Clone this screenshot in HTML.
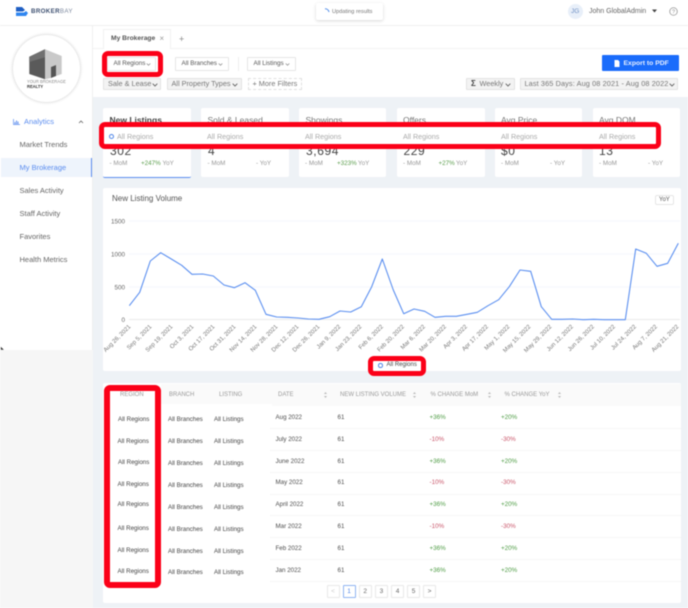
<!DOCTYPE html>
<html>
<head>
<meta charset="utf-8">
<title>Broker Bay</title>
<style>
html,body{margin:0;padding:0;background:#fff}
#p{position:relative;width:688px;height:608px;overflow:hidden;background:#fff;font-family:"Liberation Sans",sans-serif;color:#555;filter:blur(.45px)}
#p div,#p span,#p svg{position:absolute}
#p svg svg{position:static}
.t{white-space:nowrap;line-height:0;font-size:7px;color:#555;margin-top:.6px}
.c{background:#fff;border-radius:2px}
.b{box-sizing:border-box;border:1px solid #e6e6e6;background:#fff;border-radius:1px}
.g{box-sizing:border-box;border:1px solid #e2e2e2;background:#f3f3f3;border-radius:1px}
.n{font-size:7.5px;color:#666}
.ti{font-size:8.5px;color:#777}
.ar{font-size:7.2px;color:#aaa}
.v{font-size:12px;color:#444;letter-spacing:.6px}
.m{font-size:6.3px;color:#999}
.u{font-size:6.3px;color:#5c9e4e}
.h{font-size:6px;color:#999}
.r{font-size:6.2px;color:#444}
.d{font-size:6.2px;color:#4e4e4e}
.up{font-size:6.3px;color:#4f9c45}
.dn{font-size:6.3px;color:#c9566a}
.l{height:1px;background:#f6f6f6}
.red{box-sizing:border-box;border:5.5px solid #fb0018;background:#fff;border-radius:6px}
.pg{box-sizing:border-box;width:13px;height:13px;border:1px solid #e8e8e8;background:#fff;font-size:6.5px;line-height:11px;text-align:center;color:#666;border-radius:1px}
.ch path{fill:none;stroke:#888;stroke-width:.7}
.ck path{fill:none;stroke:#555;stroke-width:.8}
.so path{fill:#bbb}
</style>
</head>
<body>
<div id="p">
  <!-- backgrounds -->
  <div style="left:93px;top:97px;width:595px;height:511px;background:#eef2f6"></div>
  <div style="left:0;top:350px;width:93px;height:258px;background:#f6f6f6"></div>
  <div style="left:0;top:25px;width:688px;height:1px;background:#efefef"></div>
  <div style="left:92px;top:26px;width:1px;height:324px;background:#efefef"></div>
  <div style="left:93px;top:48px;width:595px;height:1px;background:#f3f3f3"></div>

  <!-- top bar -->
  <svg style="left:15px;top:6px" width="14" height="11" viewBox="0 0 14 11"><path d="M1 1h6l3 3-2 1.500H1z" fill="#1f5fc4"/><path d="M1 6.500h8l2-1.500 2 2-2 3H1z" fill="#2f86f0"/></svg>
  <span class="t" style="left:31px;top:11px;font-size:6.2px;font-weight:bold;color:#3c4f70;letter-spacing:.35px">BROKER<span style="position:static;font-weight:normal;color:#7d8aa0">BAY</span></span>
  <div style="left:316px;top:3px;width:67px;height:17px;background:#fff;border-radius:2px;box-shadow:0 1px 3px rgba(0,0,0,.16)"></div>
  <svg style="left:324px;top:8px" width="6" height="6" viewBox="0 0 6 6"><path d="M1 .8A4 4 0 0 1 5 4" fill="none" stroke="#4f8ce8" stroke-width="1"/></svg>
  <span class="t" style="left:332px;top:11px;font-size:5.6px;color:#777">Updating results</span>
  <div style="left:568px;top:3.500px;width:15px;height:15px;border-radius:50%;background:#e8eff9"></div>
  <span class="t" style="left:571px;top:11px;font-size:6.500px;color:#6d8fc4">JG</span>
  <span class="t" style="left:589px;top:11px;font-size:7px;color:#666">John GlobalAdmin</span>
  <svg style="left:652px;top:9px" width="5" height="4" viewBox="0 0 5 4"><path d="M0 .5h5L2.500 3.500z" fill="#444"/></svg>
  <svg style="left:669px;top:7px" width="9" height="9" viewBox="0 0 9 9"><circle cx="4.500" cy="4.500" r="3.800" fill="none" stroke="#888" stroke-width=".7"/><text x="4.500" y="6.500" font-size="5.500" text-anchor="middle" fill="#888" font-family="Liberation Sans">?</text></svg>

  <!-- sidebar -->
  <div style="left:13px;top:35px;width:67px;height:67px;border-radius:50%;background:#fff;box-shadow:0 0 3px rgba(0,0,0,.22)"></div>
  <svg style="left:0;top:0" width="93" height="100" viewBox="0 0 93 100">
    <path d="M29.300 56.700 45 49.300v30L29.300 74z" fill="#5a5a5a"/>
    <path d="M29.300 56.700 45 49.300v8L29.300 62z" fill="#707070"/>
    <path d="M45 49.300 61.700 56v18L56 76V65l-5 2v11l-6 1.300z" fill="#c9c9c9"/>
    <path d="M51 67l5-2v11l-5 2z" fill="#555"/>
  </svg>
  <span class="t" style="left:27px;top:81.500px;font-size:4.100px;color:#888">YOUR BROKERAGE</span>
  <span class="t" style="left:27px;top:86.500px;font-size:4.100px;font-weight:bold;color:#333">REALTY</span>

  <svg style="left:13px;top:119px" width="7" height="6" viewBox="0 0 7 6"><path d="M.5 0v5.500H7" fill="none" stroke="#5b8def" stroke-width=".7"/><path d="M2 5V3M3.500 5V1.500M5 5V2.500" stroke="#5b8def" stroke-width=".9"/></svg>
  <span class="t" style="left:24px;top:121.500px;font-size:7.500px;color:#5b8def">Analytics</span>
  <svg style="left:78px;top:120px" width="6" height="4" viewBox="0 0 6 4"><path d="M1 3l2-2 2 2" fill="none" stroke="#666" stroke-width=".8"/></svg>
  <span class="t n" style="left:19.500px;top:144px">Market Trends</span>
  <div style="left:1px;top:158px;width:91px;height:19px;background:#eef4fc"></div>
  <div style="left:90.500px;top:158px;width:1.500px;height:19px;background:#5b8def"></div>
  <span class="t n" style="left:19.500px;top:167px;color:#5b8def">My Brokerage</span>
  <span class="t n" style="left:19.500px;top:190px">Sales Activity</span>
  <span class="t n" style="left:19.500px;top:213px">Staff Activity</span>
  <span class="t n" style="left:19.500px;top:236px">Favorites</span>
  <span class="t n" style="left:19.500px;top:259px">Health Metrics</span>
  <svg style="left:0;top:346px" width="5" height="5" viewBox="0 0 5 5"><path d="M.8.8v3h3z" fill="#333"/></svg>

  <!-- tabs -->
  <div style="left:103px;top:29px;width:68px;height:20px;background:#fff;border:1px solid #f1f1f1;border-bottom:0;box-sizing:border-box"></div>
  <span class="t" style="left:111px;top:38.500px;font-size:6.700px;font-weight:bold;color:#555">My Brokerage</span>
  <span class="t" style="left:159.500px;top:38px;font-size:8px;color:#999">×</span>
  <span class="t" style="left:179px;top:38.500px;font-size:9px;color:#888">+</span>

  <!-- filters -->
  <div class="b" style="left:175px;top:57px;width:54px;height:14px"></div>
  <span class="t" style="left:181.500px;top:63.500px;font-size:6.300px">All Branches</span>
  <svg class="ch" style="left:217.500px;top:62.500px" width="5" height="3" viewBox="0 0 5 3"><path d="M.7.500 2.500 2.300 4.300.500"/></svg>
  <div style="left:238px;top:57px;width:1px;height:14px;background:#eee"></div>
  <div class="b" style="left:247px;top:57px;width:49px;height:14px"></div>
  <span class="t" style="left:253.500px;top:63.500px;font-size:6.300px">All Listings</span>
  <svg class="ch" style="left:285px;top:62.500px" width="5" height="3" viewBox="0 0 5 3"><path d="M.7.500 2.500 2.300 4.300.500"/></svg>
  <div class="g" style="left:103px;top:78px;width:58px;height:12px"></div>
  <span class="t" style="left:108px;top:83.500px;font-size:7.300px;color:#777">Sale &amp; Lease</span>
  <svg class="ck" style="left:151.500px;top:82.500px" width="6" height="4" viewBox="0 0 6 4"><path d="M.7.700 3 3 5.300.700"/></svg>
  <div class="g" style="left:167px;top:78px;width:75px;height:12px"></div>
  <span class="t" style="left:171.500px;top:83.500px;font-size:7.300px;color:#777">All Property Types</span>
  <svg class="ck" style="left:232.300px;top:82.500px" width="6" height="4" viewBox="0 0 6 4"><path d="M.7.700 3 3 5.300.700"/></svg>
  <div style="left:248px;top:78px;width:54px;height:12px;border:1px dashed #e0e0e0;box-sizing:border-box"></div>
  <span class="t" style="left:252.500px;top:83.500px;font-size:7.300px;color:#777">+ More Filters</span>

  <div style="left:602px;top:55px;width:77px;height:16px;background:#1a6cfb;border-radius:1px"></div>
  <svg style="left:614px;top:60px" width="6" height="7" viewBox="0 0 6 7"><path d="M.5 0H4l1.500 1.500V7H.5z" fill="#fff"/></svg>
  <span class="t" style="left:623.500px;top:63px;font-size:6.800px;font-weight:bold;color:#e8f0ff">Export to PDF</span>

  <div class="g" style="left:466px;top:78px;width:49px;height:12px"></div>
  <span class="t" style="left:471px;top:83.500px;font-size:8px;font-weight:bold;color:#444">Σ</span>
  <span class="t" style="left:479.500px;top:83.500px;font-size:7.300px;color:#777">Weekly</span>
  <svg class="ck" style="left:505.300px;top:82.500px" width="6" height="4" viewBox="0 0 6 4"><path d="M.7.700 3 3 5.300.700"/></svg>
  <div class="g" style="left:520px;top:78px;width:158px;height:12px"></div>
  <span class="t" style="left:524.500px;top:83.500px;font-size:7.300px;color:#777;letter-spacing:.12px">Last 365 Days: Aug 08 2021 - Aug 08 2022</span>
  <svg class="ck" style="left:668.700px;top:82.500px" width="6" height="4" viewBox="0 0 6 4"><path d="M.7.700 3 3 5.300.700"/></svg>

  <!-- stat cards -->
  <div class="c" style="left:103px;top:108px;width:88px;height:69px;border-bottom:1px solid #5b8def"></div>
  <div class="c" style="left:201px;top:108px;width:88px;height:69px"></div>
  <div class="c" style="left:299px;top:108px;width:87px;height:69px"></div>
  <div class="c" style="left:397px;top:108px;width:88px;height:69px"></div>
  <div class="c" style="left:495px;top:108px;width:87px;height:69px"></div>
  <div class="c" style="left:593px;top:108px;width:87px;height:69px"></div>

  <span class="t ti" style="left:109.500px;top:119.500px;font-weight:bold;color:#444">New Listings</span>
  <span class="t ti" style="left:207.500px;top:119.500px">Sold &amp; Leased</span>
  <span class="t ti" style="left:305.500px;top:119.500px">Showings</span>
  <span class="t ti" style="left:403px;top:119.500px">Offers</span>
  <span class="t ti" style="left:501px;top:119.500px">Avg Price</span>
  <span class="t ti" style="left:599px;top:119.500px">Avg DOM</span>

  <span class="t v" style="left:110px;top:150px">302</span>
  <span class="t v" style="left:208px;top:150px">4</span>
  <span class="t v" style="left:306px;top:150px">3,694</span>
  <span class="t v" style="left:403.500px;top:150px">229</span>
  <span class="t v" style="left:501px;top:150px">$0</span>
  <span class="t v" style="left:599px;top:150px">13</span>

  <span class="t m" style="left:109.500px;top:163px">- MoM</span>
  <span class="t u" style="left:141px;top:163px">+247%</span>
  <span class="t m" style="left:162.500px;top:163px">YoY</span>
  <span class="t m" style="left:207.500px;top:163px">- MoM</span>
  <span class="t m" style="left:256px;top:163px">- YoY</span>
  <span class="t m" style="left:305px;top:163px">- MoM</span>
  <span class="t u" style="left:337px;top:163px">+323%</span>
  <span class="t m" style="left:358px;top:163px">YoY</span>
  <span class="t m" style="left:403px;top:163px">- MoM</span>
  <span class="t u" style="left:438.500px;top:163px">+27%</span>
  <span class="t m" style="left:456px;top:163px">YoY</span>
  <span class="t m" style="left:501px;top:163px">- MoM</span>
  <span class="t m" style="left:550px;top:163px">- YoY</span>
  <span class="t m" style="left:599px;top:163px">- MoM</span>
  <span class="t m" style="left:648px;top:163px">- YoY</span>

  <!-- chart card -->
  <div class="c" style="left:103px;top:188px;width:578px;height:183px"></div>
  <span class="t" style="left:112px;top:198px;font-size:8px;color:#555">New Listing Volume</span>
  <div class="b" style="left:655px;top:195px;width:19px;height:10px;border-radius:2px"></div>
  <span class="t" style="left:659px;top:199.500px;font-size:6px;color:#555">YoY</span>

  <svg style="left:0;top:0" width="688" height="372" viewBox="0 0 688 372" font-family="Liberation Sans">
    <g stroke="#f1f5fb" stroke-width=".7"><path d="M129 221H680M129 254H680M129 287H680"/></g>
    <path d="M129 319.500H680" stroke="#e4e4e4" stroke-width=".8"/>
    <g font-size="6.300" fill="#666" text-anchor="end">
      <text x="125" y="223.500">1500</text><text x="125" y="256.500">1000</text><text x="125" y="289.500">500</text><text x="125" y="322">0</text>
    </g>
    <path fill="none" stroke="#5b8ff0" stroke-width="1.100" stroke-linejoin="round" d="M129.300 305.700 139.700 292.300 150.300 261 160.700 252.700 171.300 259 181.700 265.300 192 274.300 202.700 274 213.300 276 224 285 234.300 287.700 245 282.700 255.300 290.300 266 314.300 276.700 317 287.300 317.300 298 318 308.300 319 319 319.300 329.700 316.700 340 311 350.700 312 361.300 306.700 371.700 286.700 382.300 259 393.300 290 403.700 313.700 414 309 424.700 311.300 435 317.300 445.700 316.300 456.300 316.300 467 314.300 477.300 312.300 488 305.700 498.700 299.700 509.300 286.700 520 270 530.700 271.300 541.300 306.700 551.700 319.300 562.300 319.300 572.700 319 583.300 319.700 593.700 319.300 604.300 319.700 614.700 319.700 625.300 319.700 635.700 249 646.300 253.300 657 266.300 667.700 263.300 678.300 243.300"/>
    <g font-size="6" fill="#777" text-anchor="end">
      <text transform="translate(131 327) rotate(-45)">Aug 26, 2021</text>
      <text transform="translate(152 327) rotate(-45)">Sep 5, 2021</text>
      <text transform="translate(173 327) rotate(-45)">Sep 19, 2021</text>
      <text transform="translate(194 327) rotate(-45)">Oct 3, 2021</text>
      <text transform="translate(215 327) rotate(-45)">Oct 17, 2021</text>
      <text transform="translate(236 327) rotate(-45)">Oct 31, 2021</text>
      <text transform="translate(257 327) rotate(-45)">Nov 14, 2021</text>
      <text transform="translate(278 327) rotate(-45)">Nov 28, 2021</text>
      <text transform="translate(299 327) rotate(-45)">Dec 12, 2021</text>
      <text transform="translate(320 327) rotate(-45)">Dec 26, 2021</text>
      <text transform="translate(341 327) rotate(-45)">Jan 9, 2022</text>
      <text transform="translate(362 327) rotate(-45)">Jan 23, 2022</text>
      <text transform="translate(383.500 327) rotate(-45)">Feb 6, 2022</text>
      <text transform="translate(404.500 327) rotate(-45)">Feb 20, 2022</text>
      <text transform="translate(425.500 327) rotate(-45)">Mar 6, 2022</text>
      <text transform="translate(446.500 327) rotate(-45)">Mar 20, 2022</text>
      <text transform="translate(467.500 327) rotate(-45)">Apr 3, 2022</text>
      <text transform="translate(488.500 327) rotate(-45)">Apr 17, 2022</text>
      <text transform="translate(510 327) rotate(-45)">May 1, 2022</text>
      <text transform="translate(531 327) rotate(-45)">May 15, 2022</text>
      <text transform="translate(552 327) rotate(-45)">May 29, 2022</text>
      <text transform="translate(573.500 327) rotate(-45)">Jun 12, 2022</text>
      <text transform="translate(594.500 327) rotate(-45)">Jun 26, 2022</text>
      <text transform="translate(615.500 327) rotate(-45)">Jul 10, 2022</text>
      <text transform="translate(636.500 327) rotate(-45)">Jul 24, 2022</text>
      <text transform="translate(657.500 327) rotate(-45)">Aug 7, 2022</text>
      <text transform="translate(679 327) rotate(-45)">Aug 21, 2022</text>
    </g>
  </svg>

  <!-- table -->
  <div class="c" style="left:103px;top:383px;width:578px;height:220px"></div>
  <div style="left:272px;top:384px;width:409px;height:22px;background:#fafafa"></div>
  <div style="left:161px;top:384px;width:111px;height:20px;background:#fafafa"></div>
  <div class="l" style="left:270px;top:427.500px;width:411px"></div>
  <div class="l" style="left:270px;top:449.500px;width:411px"></div>
  <div class="l" style="left:270px;top:471.500px;width:411px"></div>
  <div class="l" style="left:270px;top:493.500px;width:411px"></div>
  <div class="l" style="left:270px;top:514.500px;width:411px"></div>
  <div class="l" style="left:270px;top:536.500px;width:411px"></div>
  <div class="l" style="left:270px;top:558.500px;width:411px"></div>
  <div class="l" style="left:270px;top:580.500px;width:411px"></div>

  <span class="t h" style="left:169px;top:394.500px">BRANCH</span>
  <span class="t h" style="left:219px;top:394.500px">LISTING</span>
  <span class="t h" style="left:278px;top:394.500px">DATE</span>
  <svg class="so" style="left:323.500px;top:392px" width="3" height="6" viewBox="0 0 3 6"><path d="M1.500 0 3 2H0zM0 4h3L1.500 6z"/></svg>
  <span class="t h" style="left:340px;top:394.500px">NEW LISTING VOLUME</span>
  <svg class="so" style="left:413.200px;top:392px" width="3" height="6" viewBox="0 0 3 6"><path d="M1.500 0 3 2H0zM0 4h3L1.500 6z"/></svg>
  <span class="t h" style="left:430.500px;top:394.500px">% CHANGE MoM</span>
  <svg class="so" style="left:487.500px;top:392px" width="3" height="6" viewBox="0 0 3 6"><path d="M1.500 0 3 2H0zM0 4h3L1.500 6z"/></svg>
  <span class="t h" style="left:504.500px;top:394.500px">% CHANGE YoY</span>
  <svg class="so" style="left:557.500px;top:392px" width="3" height="6" viewBox="0 0 3 6"><path d="M1.500 0 3 2H0zM0 4h3L1.500 6z"/></svg>

  <span class="t r" style="left:168px;top:419px">All Branches</span><span class="t r" style="left:214px;top:419px">All Listings</span>
  <span class="t r" style="left:168px;top:441.700px">All Branches</span><span class="t r" style="left:214px;top:441.700px">All Listings</span>
  <span class="t r" style="left:168px;top:463.500px">All Branches</span><span class="t r" style="left:214px;top:463.500px">All Listings</span>
  <span class="t r" style="left:168px;top:485px">All Branches</span><span class="t r" style="left:214px;top:485px">All Listings</span>
  <span class="t r" style="left:168px;top:507px">All Branches</span><span class="t r" style="left:214px;top:507px">All Listings</span>
  <span class="t r" style="left:168px;top:529px">All Branches</span><span class="t r" style="left:214px;top:529px">All Listings</span>
  <span class="t r" style="left:168px;top:551px">All Branches</span><span class="t r" style="left:214px;top:551px">All Listings</span>
  <span class="t r" style="left:168px;top:572.700px">All Branches</span><span class="t r" style="left:214px;top:572.700px">All Listings</span>

  <span class="t d" style="left:275.500px;top:417px">Aug 2022</span><span class="t d" style="left:337.500px;top:417px">61</span><span class="t up" style="left:429.500px;top:417px">+36%</span><span class="t up" style="left:501px;top:417px">+20%</span>
  <span class="t d" style="left:275.500px;top:439px">July 2022</span><span class="t d" style="left:337.500px;top:439px">61</span><span class="t dn" style="left:429.500px;top:439px">-10%</span><span class="t dn" style="left:501px;top:439px">-30%</span>
  <span class="t d" style="left:275.500px;top:461px">June 2022</span><span class="t d" style="left:337.500px;top:461px">61</span><span class="t up" style="left:429.500px;top:461px">+36%</span><span class="t up" style="left:501px;top:461px">+20%</span>
  <span class="t d" style="left:275.500px;top:482.500px">May 2022</span><span class="t d" style="left:337.500px;top:482.500px">61</span><span class="t dn" style="left:429.500px;top:482.500px">-10%</span><span class="t dn" style="left:501px;top:482.500px">-30%</span>
  <span class="t d" style="left:275.500px;top:504.500px">April 2022</span><span class="t d" style="left:337.500px;top:504.500px">61</span><span class="t up" style="left:429.500px;top:504.500px">+36%</span><span class="t up" style="left:501px;top:504.500px">+20%</span>
  <span class="t d" style="left:275.500px;top:526px">Mar 2022</span><span class="t d" style="left:337.500px;top:526px">61</span><span class="t dn" style="left:429.500px;top:526px">-10%</span><span class="t dn" style="left:501px;top:526px">-30%</span>
  <span class="t d" style="left:275.500px;top:548px">Feb 2022</span><span class="t d" style="left:337.500px;top:548px">61</span><span class="t up" style="left:429.500px;top:548px">+36%</span><span class="t up" style="left:501px;top:548px">+20%</span>
  <span class="t d" style="left:275.500px;top:570px">Jan 2022</span><span class="t d" style="left:337.500px;top:570px">61</span><span class="t up" style="left:429.500px;top:570px">+36%</span><span class="t up" style="left:501px;top:570px">+20%</span>

  <div class="pg" style="left:326.500px;top:585px;color:#ccc">&lt;</div>
  <div class="pg" style="left:342.500px;top:585px;border-color:#8fb4f2;color:#4f86e8">1</div>
  <div class="pg" style="left:358.700px;top:585px">2</div>
  <div class="pg" style="left:374.900px;top:585px">3</div>
  <div class="pg" style="left:391px;top:585px">4</div>
  <div class="pg" style="left:407px;top:585px">5</div>
  <div class="pg" style="left:423px;top:585px">&gt;</div>

  <!-- red annotation boxes -->
  <div class="red" style="left:101.700px;top:50.700px;width:61px;height:26px"></div>
  <div class="b" style="left:107px;top:57px;width:49px;height:14px"></div>
  <span class="t" style="left:113.500px;top:63.500px;font-size:6.300px">All Regions</span>
  <svg class="ch" style="left:145.500px;top:62.500px" width="5" height="3" viewBox="0 0 5 3"><path d="M.7.500 2.500 2.300 4.300.500"/></svg>

  <div class="red" style="left:99.300px;top:121.700px;width:561.500px;height:27.500px"></div>
  <div style="left:109px;top:134px;width:3px;height:3px;border:1.200px solid #4f86e8;border-radius:50%"></div>
  <span class="t ar" style="left:117px;top:136px">All Regions</span>
  <span class="t ar" style="left:207px;top:136px">All Regions</span>
  <span class="t ar" style="left:305px;top:136px">All Regions</span>
  <span class="t ar" style="left:403px;top:136px">All Regions</span>
  <span class="t ar" style="left:501px;top:136px">All Regions</span>
  <span class="t ar" style="left:599px;top:136px">All Regions</span>

  <div class="red" style="left:367.700px;top:355.700px;width:58.600px;height:20.500px"></div>
  <div style="left:378px;top:363px;width:2.500px;height:2.500px;border:1px solid #4f86e8;border-radius:50%"></div>
  <span class="t" style="left:386.500px;top:364.500px;font-size:6px;color:#444">All Regions</span>

  <div class="red" style="left:104px;top:385px;width:57px;height:203px;border-width:6px"></div>
  <span class="t h" style="left:120px;top:394.500px">REGION</span>
  <span class="t r" style="left:118px;top:419px">All Regions</span>
  <span class="t r" style="left:117.500px;top:441.500px">All Regions</span>
  <span class="t r" style="left:118px;top:462.500px">All Regions</span>
  <span class="t r" style="left:117.500px;top:484.500px">All Regions</span>
  <span class="t r" style="left:117.500px;top:504.700px">All Regions</span>
  <span class="t r" style="left:117.500px;top:528px">All Regions</span>
  <span class="t r" style="left:117.500px;top:550.700px">All Regions</span>
  <span class="t r" style="left:117.500px;top:571.700px">All Regions</span>
</div>
</body>
</html>
